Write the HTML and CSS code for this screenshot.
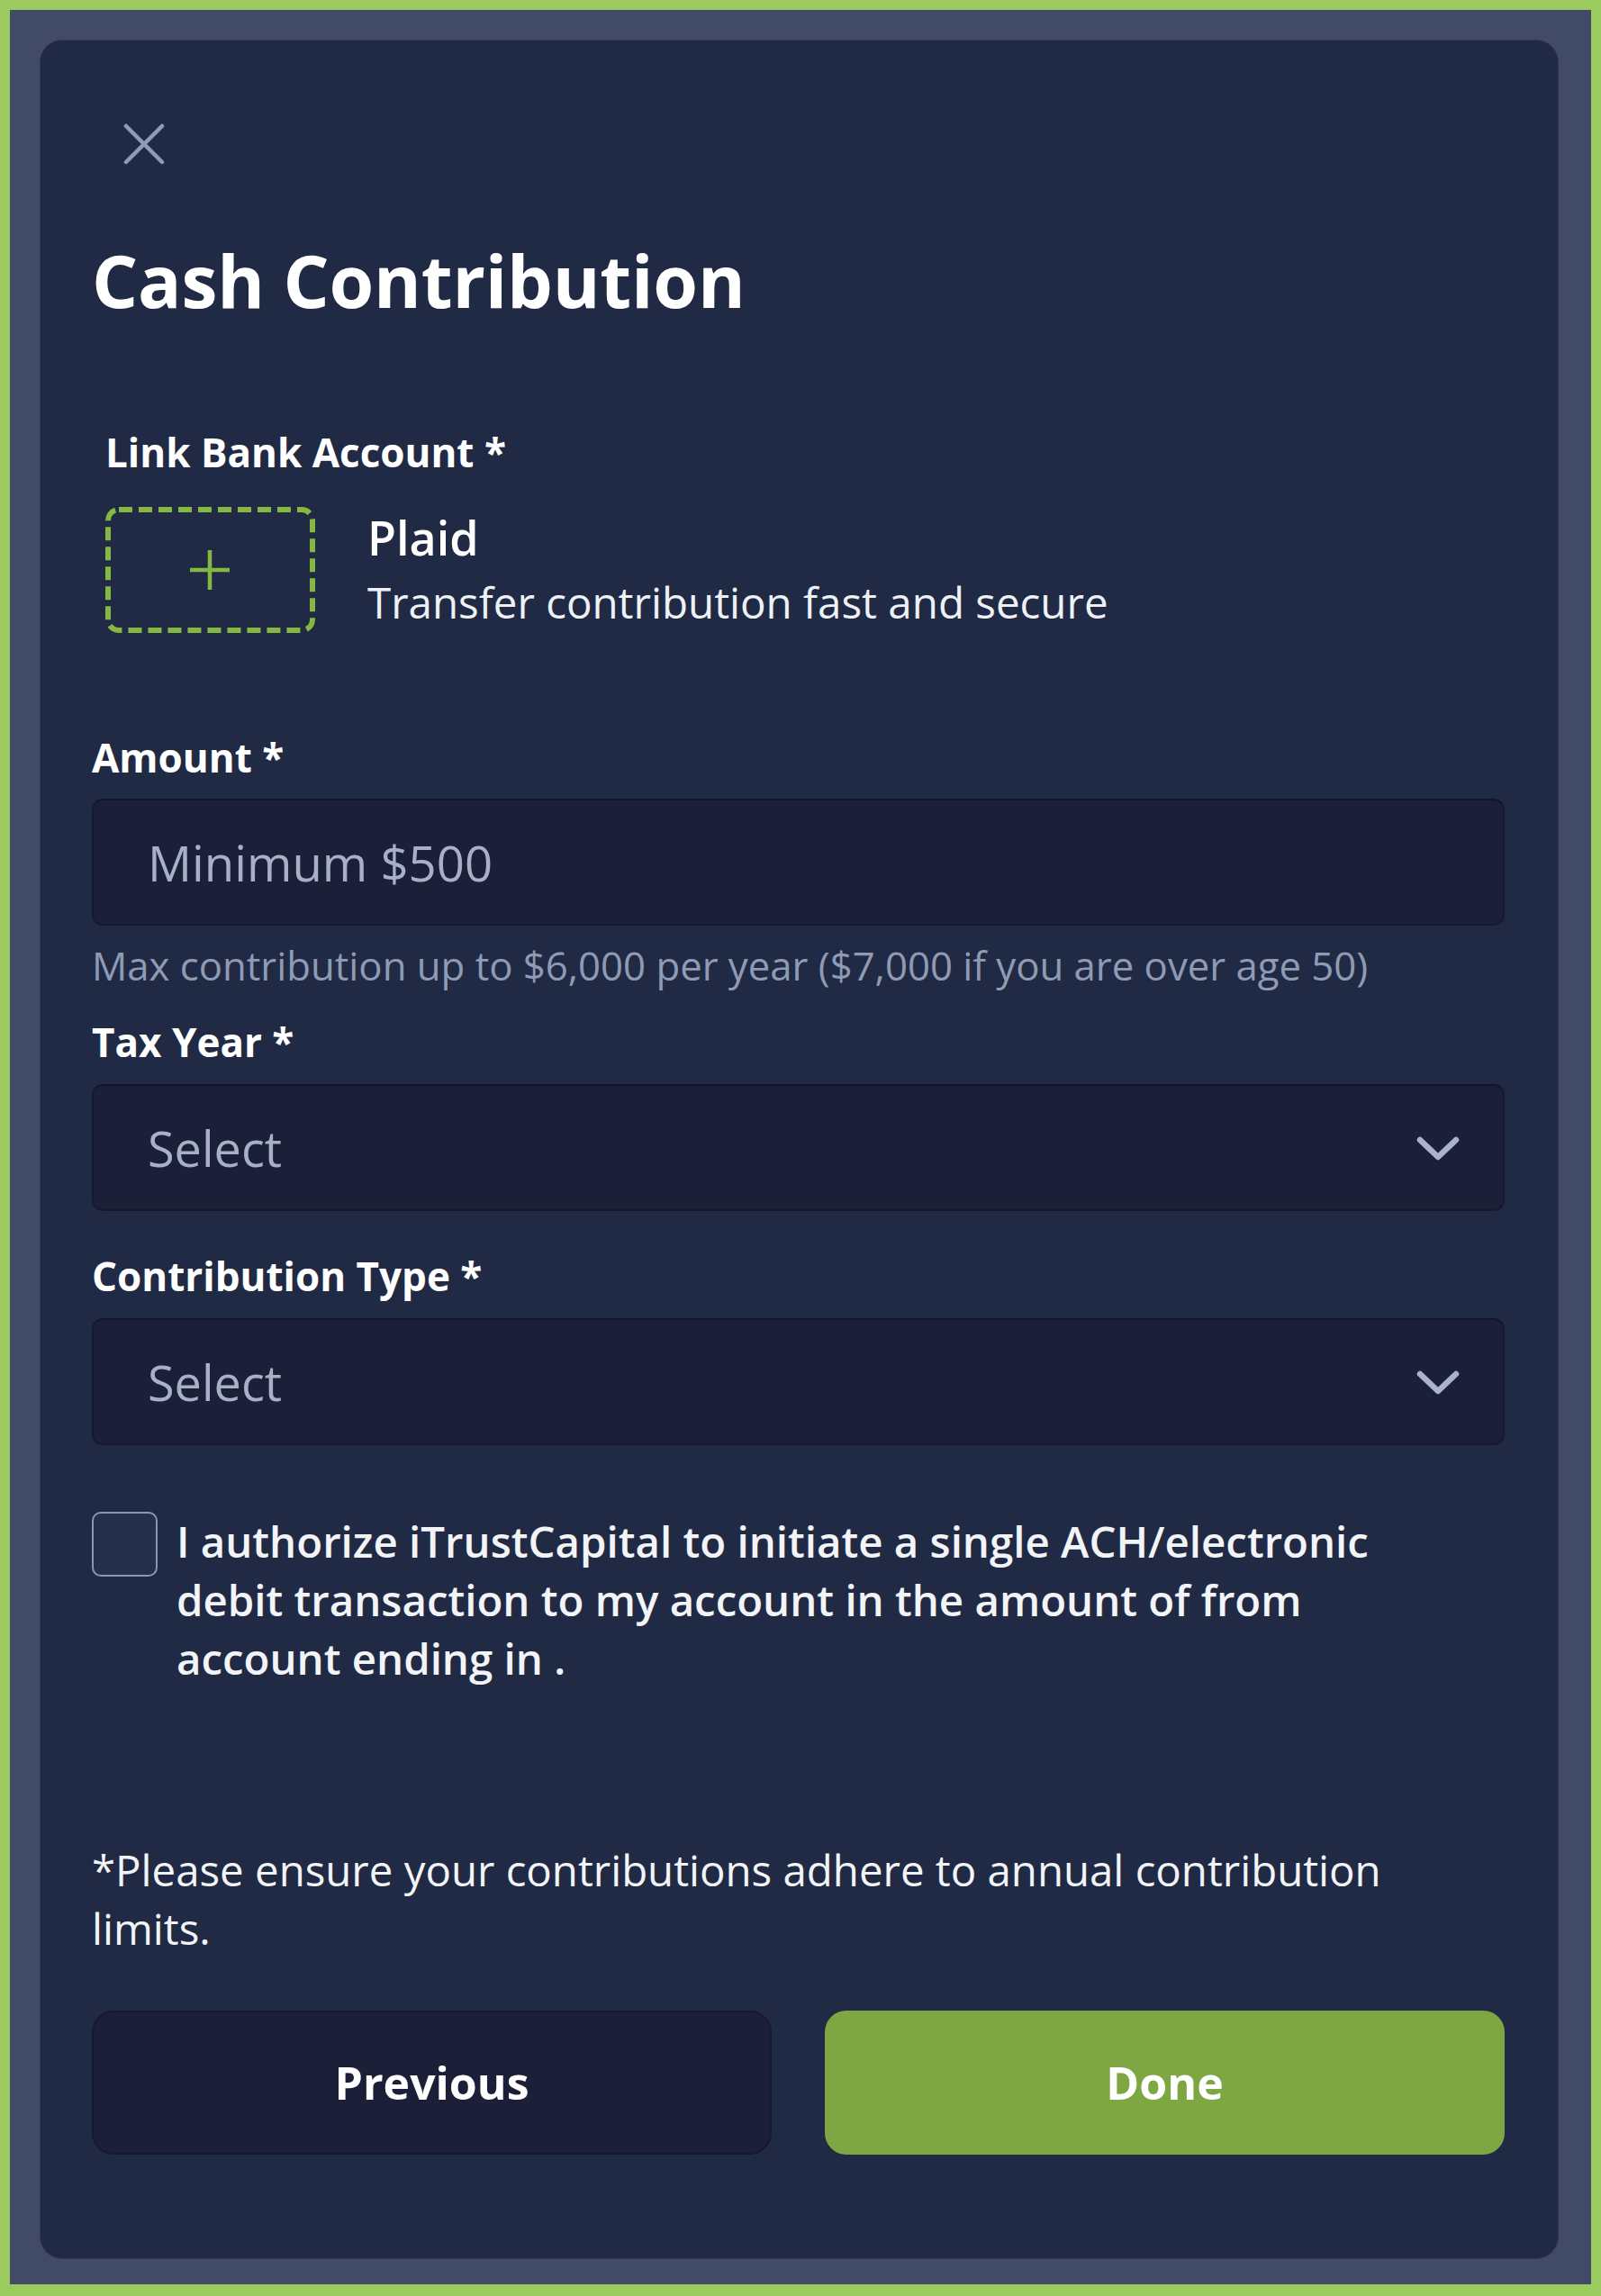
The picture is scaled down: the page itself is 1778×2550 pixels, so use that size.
FILE: index.html
```html
<!DOCTYPE html>
<html lang="en">
<head>
<meta charset="utf-8">
<title>Cash Contribution</title>
<link rel="stylesheet" href="styles.css">
</head>
<body>
<div class="frame">
  <div class="card">
    <button class="close" type="button" aria-label="Close">
      <svg width="46" height="46" viewBox="0 0 46 46"><path d="M3 3 L43 43 M43 3 L3 43" stroke="#8e9bb9" stroke-width="4.5" stroke-linecap="round" fill="none"/></svg>
    </button>
    <h1 class="title">Cash Contribution</h1>

    <div class="label label-indent">Link Bank Account *</div>
    <div class="bank-row">
      <button class="add-bank" type="button" aria-label="Add bank">
        <svg class="dash" width="233" height="140" viewBox="0 0 233 140"><rect x="3" y="3" width="227" height="134" rx="12" ry="12" fill="none" stroke="#84b842" stroke-width="6" stroke-dasharray="15 7"/></svg>
        <svg class="plus" width="46" height="46" viewBox="0 0 46 46"><path d="M23 1 V45 M1 23 H45" stroke="#84b842" stroke-width="4.5" fill="none"/></svg>
      </button>
      <div class="bank-text">
        <div class="bank-name">Plaid</div>
        <div class="bank-desc">Transfer contribution fast and secure</div>
      </div>
    </div>

    <div class="label label-amount">Amount *</div>
    <input class="field" type="text" placeholder="Minimum $500">
    <div class="helper">Max contribution up to $6,000 per year ($7,000 if you are over age 50)</div>

    <div class="label label-tax">Tax Year *</div>
    <div class="field select">
      <span>Select</span>
      <svg width="50" height="30" viewBox="0 0 50 30"><path d="M5 6 L25 25 L45 6" stroke="#a9b4cc" stroke-width="6.5" fill="none" stroke-linecap="round" stroke-linejoin="round"/></svg>
    </div>

    <div class="label label-type">Contribution Type *</div>
    <div class="field select">
      <span>Select</span>
      <svg width="50" height="30" viewBox="0 0 50 30"><path d="M5 6 L25 25 L45 6" stroke="#a9b4cc" stroke-width="6.5" fill="none" stroke-linecap="round" stroke-linejoin="round"/></svg>
    </div>

    <label class="auth">
      <span class="checkbox"></span>
      <span class="auth-text">I authorize iTrustCapital to initiate a single ACH/electronic debit transaction to my account in the amount of from account ending in .</span>
    </label>

    <p class="note">*Please ensure your contributions adhere to annual contribution limits.</p>

    <div class="actions">
      <button class="btn btn-prev" type="button">Previous</button>
      <button class="btn btn-done" type="button">Done</button>
    </div>
  </div>
</div>
</body>
</html>
```

FILE: styles.css
```css
* { box-sizing: border-box; }

html, body {
  margin: 0;
  padding: 0;
}

body {
  font-family: "Open Sans", "Noto Sans", "Liberation Sans", sans-serif;
  color: #ffffff;
  background: #9bcb5e;
}

.frame {
  width: 1778px;
  height: 2550px;
  border: 11px solid #9bcb5e;
  border-bottom-width: 13px;
  background: #414a66;
  padding: 34px 37px 29px 34px;
}

.card {
  height: 2463px;
  background: #212a44;
  border-radius: 24px;
  padding: 92px 59px 0 57px;
  display: flex;
  flex-direction: column;
  box-shadow: 0 0 0 1px rgba(20, 26, 46, 0.35);
}

.close {
  width: 46px;
  height: 46px;
  margin-left: 35px;
  padding: 0;
  border: 0;
  background: none;
  display: block;
}
.close svg { display: block; }

.title {
  margin: 80px 0 0 0;
  font-size: 80.4px;
  line-height: 96px;
  font-weight: 700;
  letter-spacing: -0.2px;
}

.label {
  font-size: 44px;
  line-height: 57px;
  font-weight: 700;
}

.label-indent {
  margin-top: 115px;
  margin-left: 15px;
}

.bank-row {
  margin-top: 32px;
  margin-left: 15px;
  display: flex;
  align-items: flex-start;
  gap: 58px;
}

.add-bank {
  position: relative;
  width: 233px;
  height: 140px;
  padding: 0;
  border: 0;
  background: none;
  flex: none;
}
.add-bank .dash { display: block; }
.add-bank .plus {
  position: absolute;
  left: 93px;
  top: 47px;
}

.bank-name {
  font-size: 52px;
  line-height: 68px;
  font-weight: 600;
}

.bank-desc {
  margin-top: 4px;
  font-size: 47.5px;
  line-height: 67px;
  font-weight: 400;
  color: #eef1f6;
}

.label-amount { margin-top: 110px; }

.field {
  display: block;
  width: 100%;
  height: 141px;
  margin-top: 17px;
  background: #1b1f37;
  border: 2px solid #161a2f;
  border-top-color: #12162a;
  border-radius: 12px;
  padding: 0 47px 0 60px;
  font-family: inherit;
  font-size: 54.5px;
  color: #ffffff;
  outline: none;
}

.field::placeholder {
  color: #a6b0c6;
  opacity: 1;
}

.helper {
  margin-top: 16px;
  font-size: 43.7px;
  line-height: 57px;
  color: #8f9ab4;
}

.label-tax { margin-top: 28px; }
.label-type { margin-top: 44px; }

.select {
  display: flex;
  align-items: center;
  justify-content: space-between;
  margin-top: 18px;
  color: #a6b0c6;
  font-size: 54px;
}
.select span { line-height: 74px; }
.select svg { display: block; }

.auth {
  margin-top: 74px;
  display: flex;
  align-items: flex-start;
  gap: 21px;
}

.checkbox {
  flex: none;
  width: 73px;
  height: 72px;
  border: 2px solid #8b97b0;
  border-radius: 10px;
  background: #262f4b;
}

.auth-text {
  max-width: 1400px;
  font-size: 47.4px;
  line-height: 65px;
  font-weight: 600;
  color: #f2f4f8;
}

.note {
  margin: 170px 0 0 0;
  font-size: 47.4px;
  line-height: 65px;
  font-weight: 400;
  color: #f2f4f8;
}

.actions {
  margin-top: 59px;
  display: grid;
  grid-template-columns: 1fr 1fr;
  gap: 59px;
}

.btn {
  height: 160px;
  border-radius: 24px;
  font-family: inherit;
  font-size: 50px;
  font-weight: 700;
  color: #ffffff;
}

.btn-prev {
  background: #1b1f37;
  border: 2px solid #161a2f;
}

.btn-done {
  background: #7ea743;
  border: 0;
}
```
